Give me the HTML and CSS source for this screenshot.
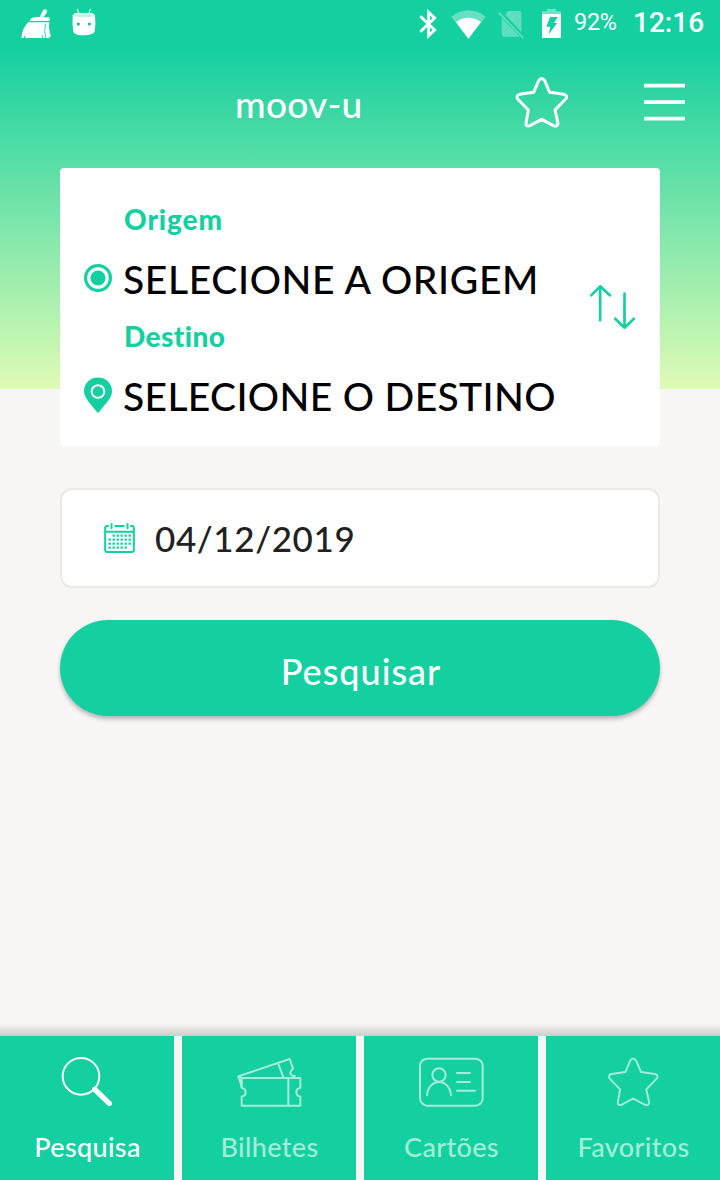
FILE: index.html
```html
<!DOCTYPE html>
<html lang="pt">
<head>
    <meta charset="UTF-8">
    <meta name="viewport" content="width=device-width, initial-scale=1.0">
    <title>moov-u</title>
    <link rel="stylesheet" href="styles.css">
</head>
<body>
    <div class="status-bar">
        <svg class="icon-broom" width="30" height="30" viewBox="0 0 90 90">
            <path fill="#fff" d="M56 24L66 4Q71-2 77 3Q80 6 77 11L67 25L84 25Q89 29 85 36L26 36Q29 25 43 25Z"/>
            <path fill="#fff" d="M22 40H85Q82 62 90 82L84 84L86 87H67L62 74L63 87H14L10 79L9 87H1Q3 58 22 40Z"/>
            <path fill="none" stroke="#14cfa0" stroke-width="2.5" d="M74 44Q68 62 74 87"/>
        </svg>
        <svg class="icon-droid" width="24" height="28" viewBox="0 0 72 84">
            <path fill="none" stroke="#fff" stroke-width="4" stroke-opacity=".75" stroke-linecap="round" d="M16 4L21 18M55 4L50 18"/>
            <path fill="#fff" d="M2 22Q4 16 15 15H56Q68 16 69 24Q72 48 68 70Q66 81 36 82Q7 82 4 71Q0 48 2 22Z"/>
            <ellipse cx="36" cy="22" rx="29" ry="6" fill="#c4f3e5"/>
            <circle cx="19" cy="48" r="4.5" fill="#14b78e"/>
            <circle cx="52" cy="48" r="4.5" fill="#14b78e"/>
        </svg>
        <svg class="icon-bluetooth" width="18" height="30" viewBox="0 0 54 90">
            <path fill="none" stroke="#fff" stroke-width="8.5" d="M4 22L47 63L29 80V10L47 27L4 68"/>
        </svg>
        <svg class="icon-wifi" width="35" height="29" viewBox="0 0 105 87">
            <path fill="#fff" fill-opacity=".35" d="M1 20Q52-18 104 20L52 86Z"/>
            <path fill="#fff" d="M15 36Q52 10 90 36L52 86Z"/>
        </svg>
        <svg class="icon-sim" width="26" height="29" viewBox="0 0 78 87">
            <path fill="#fff" fill-opacity=".32" d="M30 3H64Q70 3 70 9V66L22 15ZM11 24L66 80H18Q11 80 11 73Z"/>
            <path stroke="#fff" stroke-opacity=".35" stroke-width="5" d="M2 8L76 84"/>
        </svg>
        <svg class="icon-battery" width="19" height="29" viewBox="0 0 57 87">
            <path fill="#fff" fill-opacity=".4" d="M15 0H42V7H57V15H0V7H15Z"/>
            <path fill="#fff" d="M0 15H57V87H0Z"/>
            <path fill="#14cfa0" d="M24 24H47L36 42H46L20 76L25 53H13Z"/>
        </svg>
        <span class="battery-level">92%</span>
        <span class="clock">12:16</span>
    </div>

    <header class="toolbar">
        <h1 class="title">moov-u</h1>
        <svg class="star" width="52" height="50" viewBox="0 0 156 150">
            <path d="M53 46L68 11Q77-2 86 11L101 46L143 52Q157 56 149 66L117 99L126 139Q124 151 112 146L77 127L42 146Q29 150 30 139L37 99L5 66Q-1 55 11 52Z"/>
        </svg>
        <svg class="menu" width="41" height="38" viewBox="0 0 41 38">
            <path d="M0 2.600H41M0 19.100H41M0 35.600H41"/>
        </svg>
    </header>

    <main class="content">
        <section class="route">
            <div class="stops">
                <div class="stop">
                    <div class="stop-label origin-label">Origem</div>
                    <div class="stop-row">
                        <svg width="28" height="28" viewBox="0 0 28 28">
                            <circle cx="14" cy="14" r="12.4" fill="none" stroke="#14cfa0" stroke-width="3.2"/>
                            <circle cx="14" cy="14" r="7.6" fill="#14cfa0"/>
                        </svg>
                        <span class="stop-value origin">SELECIONE A ORIGEM</span>
                    </div>
                </div>
                <div class="stop">
                    <div class="stop-label">Destino</div>
                    <div class="stop-row">
                        <svg width="28" height="36" viewBox="0 0 28 36">
                            <path fill="#14cfa0" d="M14 .5C6 .5 0 6.500 0 14C0 22 8 28 12.600 34.800Q14 36.500 15.400 34.800C20 28 28 22 28 14C28 6.500 22 .5 14 .5Z"/>
                            <circle cx="14" cy="14.500" r="6.300" fill="none" stroke="#fff" stroke-width="2"/>
                        </svg>
                        <span class="stop-value">SELECIONE O DESTINO</span>
                    </div>
                </div>
            </div>
            <svg class="swap" width="45" height="44" viewBox="0 0 134 132">
                <path d="M30 4V106M3 31L30 4L59 31M103 26V128M75 101L103 128L131 101"/>
            </svg>
        </section>

        <div class="date-field">
            <svg width="31" height="30" viewBox="0 0 92 90">
                <path fill="none" stroke="#14cfa0" stroke-width="6" d="M14 9H9Q3 9 3 15V80Q3 87 10 87H82Q89 87 89 80V15Q89 9 83 9H78M31 9H61M3 26H89"/>
                <path fill="none" stroke="#14cfa0" stroke-width="6" stroke-linecap="round" d="M22 3V16M70 3V16"/>
                <path fill="none" stroke="#14cfa0" stroke-width="7" stroke-dasharray="7 5" d="M25 38H80M13 50H80M13 62H80M13 74H68"/>
            </svg>
            <span class="date">04/12/2019</span>
        </div>

        <button class="search-button">Pesquisar</button>
    </main>

    <nav class="tabs">
        <a class="tab active">
            <svg width="51" height="50" viewBox="0 0 153 150">
                <circle cx="57" cy="58" r="55"/>
                <path class="handle" d="M98 97L142 139"/>
            </svg>
            <span>Pesquisa</span>
        </a>
        <a class="tab">
            <svg width="66" height="50" viewBox="-3 -1 198 150">
                <path d="M15 91L4 57L158 5L168 34Q156 44 162 52Q168 57 176 56M11 58L14 80M123 17L139 60"/>
                <path d="M14 62H190V91C174 94 174 115 190 118V145H14V118C30 114 30 95 14 91ZM154 62V145"/>
            </svg>
            <span>Bilhetes</span>
        </a>
        <a class="tab">
            <svg width="66" height="50" viewBox="-2 0 198 150">
                <rect x="4" y="5" width="188" height="141" rx="22"/>
                <circle cx="61" cy="54" r="20"/>
                <path stroke-linecap="round" d="M25 115C29 62 93 62 97 115M115 48H154M115 75H154M115 101H169"/>
            </svg>
            <span>Cartões</span>
        </a>
        <a class="tab">
            <svg width="51" height="49" viewBox="0 0 156 150">
                <path d="M53 46L68 11Q77-2 86 11L101 46L143 52Q157 56 149 66L117 99L126 139Q124 151 112 146L77 127L42 146Q29 150 30 139L37 99L5 66Q-1 55 11 52Z"/>
            </svg>
            <span>Favoritos</span>
        </a>
    </nav>
</body>
</html>
```
FILE: styles.css
```css
* {
    margin: 0;
    padding: 0;
    box-sizing: border-box;
}

body {
    width: 720px;
    height: 1180px;
    display: flex;
    flex-direction: column;
    font-family: 'Lato', sans-serif;
    font-weight: 500;
    font-variant-ligatures: none;
    background: #f7f6f5 linear-gradient(180deg, #14cfa0 0, #14cfa0 48px, #dffbb5 389px) no-repeat;
    background-size: 100% 389px;
    overflow: hidden;
}

svg {
    display: block;
    flex: none;
    overflow: visible;
}

/* Status bar */
.status-bar {
    height: 48px;
    display: flex;
    align-items: center;
    padding: 0 16px 0 21px;
    color: #fff;
    font-family: 'Roboto', sans-serif;
}

.icon-droid {
    margin: 0 auto 4px 21px;
}

.icon-wifi {
    margin-left: 14px;
}

.icon-sim {
    margin-left: 12px;
}

.icon-battery {
    margin: 0 13px 2px 18px;
}

.battery-level {
    width: 44px;
    font-size: 23.5px;
    font-weight: 400;
    line-height: 28px;
    margin-bottom: 4px;
    letter-spacing: -0.3px;
}

.clock {
    width: 71px;
    font-size: 28px;
    font-weight: 500;
    line-height: 32px;
    margin: 0 0 3px 15px;
    white-space: nowrap;
}

/* Toolbar */
.toolbar {
    height: 108px;
    margin-bottom: 12px;
    padding: 0 35px 0 235px;
    display: flex;
    align-items: center;
}

.title {
    color: #fff;
    font-size: 37px;
    font-weight: 500;
    line-height: 44px;
    letter-spacing: 0.3px;
    margin: 4px auto 0 0;
}

.star {
    fill: none;
    stroke: #fff;
    stroke-width: 9;
    stroke-linejoin: round;
}

.menu {
    margin-left: 76px;
    stroke: #fff;
    stroke-width: 3.6;
}

/* Search form */
.content {
    flex: 1;
    padding: 0 60px;
    background: linear-gradient(rgba(0, 0, 0, 0), rgba(0, 0, 0, 0.17)) no-repeat bottom;
    background-size: 100% 13px;
}

.route {
    height: 278px;
    padding: 32px 25px 0 24px;
    display: flex;
    justify-content: space-between;
    background: #fff;
    border-radius: 4px;
}

.stop {
    height: 117px;
}

.stop-label {
    height: 36px;
    margin: 0 0 12px 40px;
    color: #14cfa0;
    font-size: 28px;
    font-weight: 900;
    line-height: 38px;
    letter-spacing: 0.4px;
}

.origin-label {
    letter-spacing: 0.9px;
}

.stop-row {
    height: 60px;
    display: flex;
    align-items: center;
    gap: 11px;
}

.stop-value {
    padding-top: 2px;
    color: #000;
    font-size: 39px;
    line-height: 60px;
    letter-spacing: 0.35px;
    white-space: nowrap;
}

.origin {
    letter-spacing: 0.65px;
}

.swap {
    margin-top: 85px;
    fill: none;
    stroke: #14cfa0;
    stroke-width: 8;
    stroke-linecap: round;
    stroke-linejoin: round;
}

.date-field {
    height: 100px;
    margin-top: 42px;
    padding-left: 42px;
    display: flex;
    align-items: center;
    gap: 20px;
    background: #fff;
    border: 2px solid #e9e9e9;
    border-radius: 12px;
}

.date {
    color: #212121;
    font-size: 35px;
    line-height: 50px;
    letter-spacing: 0.6px;
}

.search-button {
    display: block;
    width: 100%;
    height: 96px;
    margin-top: 32px;
    padding: 5px 0 0 2px;
    border: 0;
    border-radius: 48px;
    background: #14cfa0;
    box-shadow: 0 3px 4px rgba(0, 0, 0, 0.27);
    color: #fff;
    font-family: inherit;
    font-size: 36px;
    font-weight: 500;
    line-height: 90px;
    letter-spacing: 1px;
}

/* Bottom tabs */
.tabs {
    height: 144px;
    display: grid;
    grid-template-columns: repeat(4, 174px);
    gap: 8px;
    background: #f7f6f5;
}

.tab {
    height: 144px;
    padding-top: 21px;
    display: flex;
    flex-direction: column;
    align-items: center;
    background: #14cfa0;
    color: #a3edd9;
    font-size: 27px;
    line-height: 36px;
    letter-spacing: 0.35px;
}

.tab svg {
    fill: none;
    stroke: #a3edd9;
    stroke-width: 6;
    stroke-linejoin: round;
}

.tab span {
    margin-top: auto;
    margin-bottom: 15px;
    padding-left: 1px;
}

.tab.active {
    color: #fff;
}

.tab.active svg {
    stroke: #fff;
}

.tab .handle {
    stroke-width: 16;
    stroke-linecap: round;
}
```
